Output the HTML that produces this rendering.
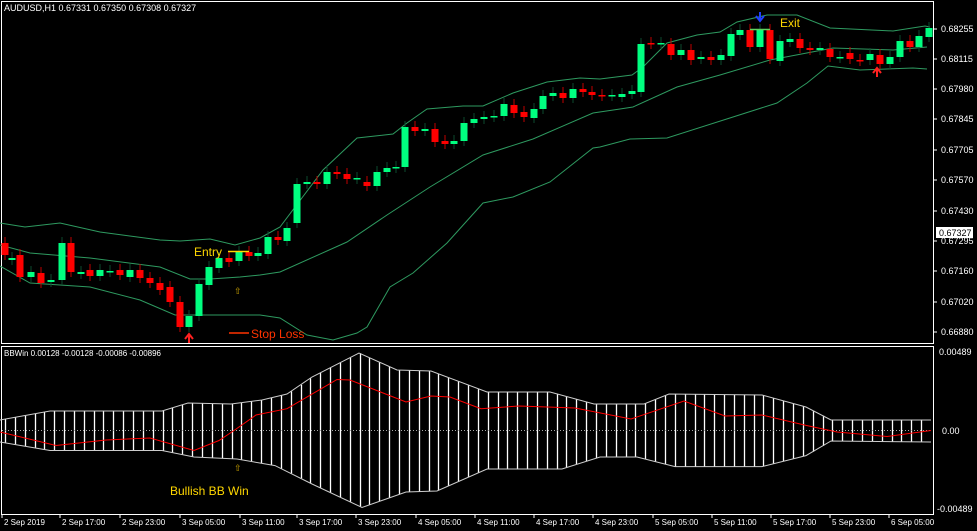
<!DOCTYPE html>
<html><head><meta charset="utf-8"><style>
html,body{margin:0;padding:0;background:#000;width:977px;height:531px;overflow:hidden}
svg{display:block}
text{font-family:"Liberation Sans",sans-serif;font-size:9px;fill:#fff}
</style></head><body>
<svg id="s" width="977" height="531" xmlns="http://www.w3.org/2000/svg">
<rect width="977" height="531" fill="#000"/>
</svg>
<script>
const S=document.getElementById('s');let h='';
function pl(pts,c,w){return '<polyline fill="none" stroke="'+c+'" stroke-width="'+(w||1)+'" points="'+pts.map(p=>p.join(',')).join(' ')+'"/>';}
function interp(pts,x){for(let i=0;i<pts.length-1;i++){if(x>=pts[i][0]&&x<=pts[i+1][0]){let t=(x-pts[i][0])/(pts[i+1][0]-pts[i][0]);return pts[i][1]+t*(pts[i+1][1]-pts[i][1]);}}return x<pts[0][0]?pts[0][1]:pts[pts.length-1][1];}
h+='<rect x="1.5" y="1.5" width="932" height="342" fill="none" stroke="#fff"/>';
h+='<rect x="1.5" y="346.5" width="932" height="168" fill="none" stroke="#fff"/>';
const up=[[0,223],[25,227],[60,223],[100,232],[160,240],[180,241],[210,239],[235,245],[260,238],[280,227],[323,170],[357,138],[393,134],[407,123],[427,109],[463,106],[483,106],[513,93],[547,82],[580,78],[600,79],[632,75],[643,67],[667,43],[697,35],[720,32],[737,22],[767,15],[797,15],[830,28],[893,31],[925,26],[930,27]];
const mid=[[0,245],[30,253],[90,258],[160,267],[190,279],[210,279],[240,277],[260,275],[280,272],[347,242],[387,215],[430,187],[483,155],[533,139],[593,113],[620,109],[633,107],[677,87],[720,75],[770,60],[833,48],[893,50],[927,47]];
const lo=[[0,266],[30,283],[90,287],[140,300],[175,315],[195,315],[260,315],[280,318],[307,335],[333,340],[357,333],[367,327],[390,287],[413,273],[447,243],[483,203],[513,197],[550,182],[593,148],[600,147],[630,139],[667,138],[733,117],[777,103],[807,83],[828,66],[860,70],[913,68],[927,69]];
[up,mid,lo].forEach(b=>h+=pl(b,'#2e9a60',1));
const C=[[5,243,255,'r'],[12,258,260,'g'],[20,255,277,'r'],[31,272,277,'g'],[41,273,283,'r'],[51,280,282,'g'],[62,243,280,'g'],[71,243,272,'r'],[81,272,274,'g'],[90,270,276,'r'],[100,270,276,'g'],[110,271,272,'g'],[120,270,275,'r'],[130,270,277,'g'],[140,270,278,'r'],[150,278,283,'r'],[160,283,290,'r'],[170,287,302,'r'],[180,302,327,'r'],[189,316,327,'g'],[199,284,316,'g'],[209,267,285,'g'],[219,258,268,'g'],[229,258,262,'r'],[239,252,261,'g'],[249,252,256,'r'],[258,253,256,'g'],[268,237,254,'g'],[278,237,240,'r'],[287,228,241,'g'],
[297,184,223,'g'],[307,182,184,'g'],[317,182,184,'r'],[327,172,184,'g'],[337,172,174,'r'],[347,174,179,'r'],[357,178,179,'g'],[367,182,186,'r'],[377,172,186,'g'],[387,168,172,'g'],[396,167,168,'g'],[405,127,167,'g'],[415,127,131,'r'],[425,129,131,'g'],[435,129,142,'r'],[445,141,144,'r'],[454,141,144,'g'],[464,123,141,'g'],[474,119,123,'g'],[484,117,119,'g'],[494,116,117,'g'],[504,104,116,'g'],[514,105,113,'r'],[524,112,117,'r'],[534,109,118,'g'],[543,96,109,'g'],[553,93,96,'g'],[563,93,98,'r'],[573,89,98,'g'],[583,89,92,'r'],[592,92,95,'r'],[602,95,96,'r'],[612,95,96,'g'],[622,94,97,'g'],[632,91,94,'g'],[641,44,92,'g'],[651,43,44,'r'],[661,43,44,'g'],[671,44,55,'r'],[681,50,55,'g'],[691,50,60,'r'],[701,57,59,'g'],[711,57,60,'r'],[721,55,60,'g'],[731,34,56,'g'],[740,30,35,'g'],[750,30,47,'r'],[760,30,47,'g'],[770,30,59,'r'],[780,41,61,'g'],[790,39,42,'g'],[800,39,48,'r'],[810,48,50,'r'],[820,48,50,'g'],[830,49,57,'r'],[840,57,58,'g'],[850,53,59,'r'],[860,60,61,'r'],[870,54,60,'g'],[880,55,64,'r'],[890,57,64,'g'],[900,41,57,'g'],[910,41,47,'r'],[919,36,47,'g'],[929,28,37,'g']];
C.forEach(c=>{const col=c[3]=='g'?'#00ff80':'#ff0000';const wc=c[3]=='g'?'#0c4a2e':'#c00000';
h+='<line x1="'+c[0]+'" x2="'+c[0]+'" y1="'+(c[1]-6)+'" y2="'+(c[2]+5)+'" stroke="'+wc+'"/>';
h+='<rect x="'+(c[0]-3.5)+'" y="'+c[1]+'" width="7" height="'+Math.max(1.5,c[2]-c[1])+'" fill="'+col+'"/>';});
h+='<line x1="228" x2="249" y1="251.5" y2="251.5" stroke="#ffd700" stroke-width="1.5"/>';
h+='<text x="194" y="256" style="font-size:12px;fill:#ffd700">Entry</text>';
h+='<text x="234" y="294" style="font-size:9px;fill:#c8a000">⇧</text>';
h+='<line x1="229" x2="249" y1="333" y2="333" stroke="#ff3300" stroke-width="1.5"/>';
h+='<text x="251" y="338" style="font-size:12px;fill:#ff3300">Stop Loss</text>';
h+='<path d="M189 343V335M185 339L189 334L193 339" stroke="#ff2020" stroke-width="2" fill="none"/>';
h+='<path d="M877 77V69M873 73L877 68L881 73" stroke="#ff2020" stroke-width="2" fill="none"/>';
h+='<path d="M760 12V20M756 16L760 21L764 16" stroke="#2040ff" stroke-width="2" fill="none"/>';
h+='<line x1="750" x2="770" y1="29.5" y2="29.5" stroke="#5fd35f" stroke-width="1.5"/>';
h+='<text x="780" y="27" style="font-size:12px;fill:#ffd700">Exit</text>';
h+='<text x="4" y="11">AUDUSD,H1  0.67331 0.67350 0.67308 0.67327</text>';
const P=[['0.68255',29],['0.68115',59],['0.67980',89],['0.67845',119],['0.67705',150],['0.67570',180],['0.67430',211],['0.67295',241],['0.67160',271],['0.67020',302],['0.66880',332]];
P.forEach(p=>{h+='<line x1="934" x2="937" y1="'+p[1]+'" y2="'+p[1]+'" stroke="#fff"/><text x="941" y="'+(p[1]+3)+'">'+p[0]+'</text>';});
h+='<rect x="936" y="227" width="37" height="11" fill="#fff"/><text x="939" y="236" style="fill:#000">0.67327</text>';
const iu=[[0,420],[50,411],[162,411],[188,403],[231,404],[262,400],[287,394],[312,377],[359,353],[397,370],[431,371],[487,392],[550,392],[594,404],[644,404],[669,394],[762,395],[806,407],[831,420],[931,420]];
const il=[[0,442],[50,450.5],[162,450.5],[194,457],[237,459],[275,465.6],[312,484],[362,507.5],[406,492],[437,491],[487,469],[562,469],[600,457],[637,457],[675,466.6],[762,466.6],[806,455.6],[831,441],[931,442]];
const rd=[[0,432],[56,445.5],[106,440],[150,438],[194,450.5],[219,440.5],[234,430.5],[256,415],[287,408.7],[337,379.5],[350,380],[406,402],[431,396],[450,397],[481,408.7],[519,406],[575,408],[631,419],[684,401],[725,416],[762,415],[806,425.4],[837,432],[887,436.5],[931,430.5]];
for(let x=5;x<=930;x+=9.85){const xx=Math.round(x)+0.5;h+='<line x1="'+xx+'" x2="'+xx+'" y1="'+interp(iu,x).toFixed(1)+'" y2="'+interp(il,x).toFixed(1)+'" stroke="#fff" stroke-width="1.3"/>';}
h+=pl(iu,'#ccc',1)+pl(il,'#ccc',1);
h+='<line x1="2" x2="932" y1="430.5" y2="430.5" stroke="#aaa" stroke-dasharray="1,2"/>';
h+=pl(rd,'#ff0000',1);
h+='<text x="4" y="356" style="font-size:8px">BBWin 0.00128 -0.00128 -0.00086 -0.00896</text>';
h+='<text x="234" y="471" style="font-size:9px;fill:#c8a000">⇧</text>';
h+='<text x="170" y="495" style="font-size:12px;fill:#ffd700">Bullish BB Win</text>';
h+='<text x="939" y="355">0.00489</text><text x="942" y="434">0.00</text><text x="937" y="512">-0.00489</text>';
const T=[[2,'2 Sep 2019'],[60,'2 Sep 17:00'],[120,'2 Sep 23:00'],[180,'3 Sep 05:00'],[240,'3 Sep 11:00'],[297,'3 Sep 17:00'],[356,'3 Sep 23:00'],[416,'4 Sep 05:00'],[475,'4 Sep 11:00'],[534,'4 Sep 17:00'],[593,'4 Sep 23:00'],[653,'5 Sep 05:00'],[712,'5 Sep 11:00'],[771,'5 Sep 17:00'],[830,'5 Sep 23:00'],[889,'6 Sep 05:00']];
T.forEach(t=>{h+='<line x1="'+t[0]+'" x2="'+t[0]+'" y1="515" y2="518" stroke="#fff"/><text x="'+(t[0]+2)+'" y="525" style="font-size:8px">'+t[1]+'</text>';});
S.innerHTML+=h;
</script>
</body></html>
